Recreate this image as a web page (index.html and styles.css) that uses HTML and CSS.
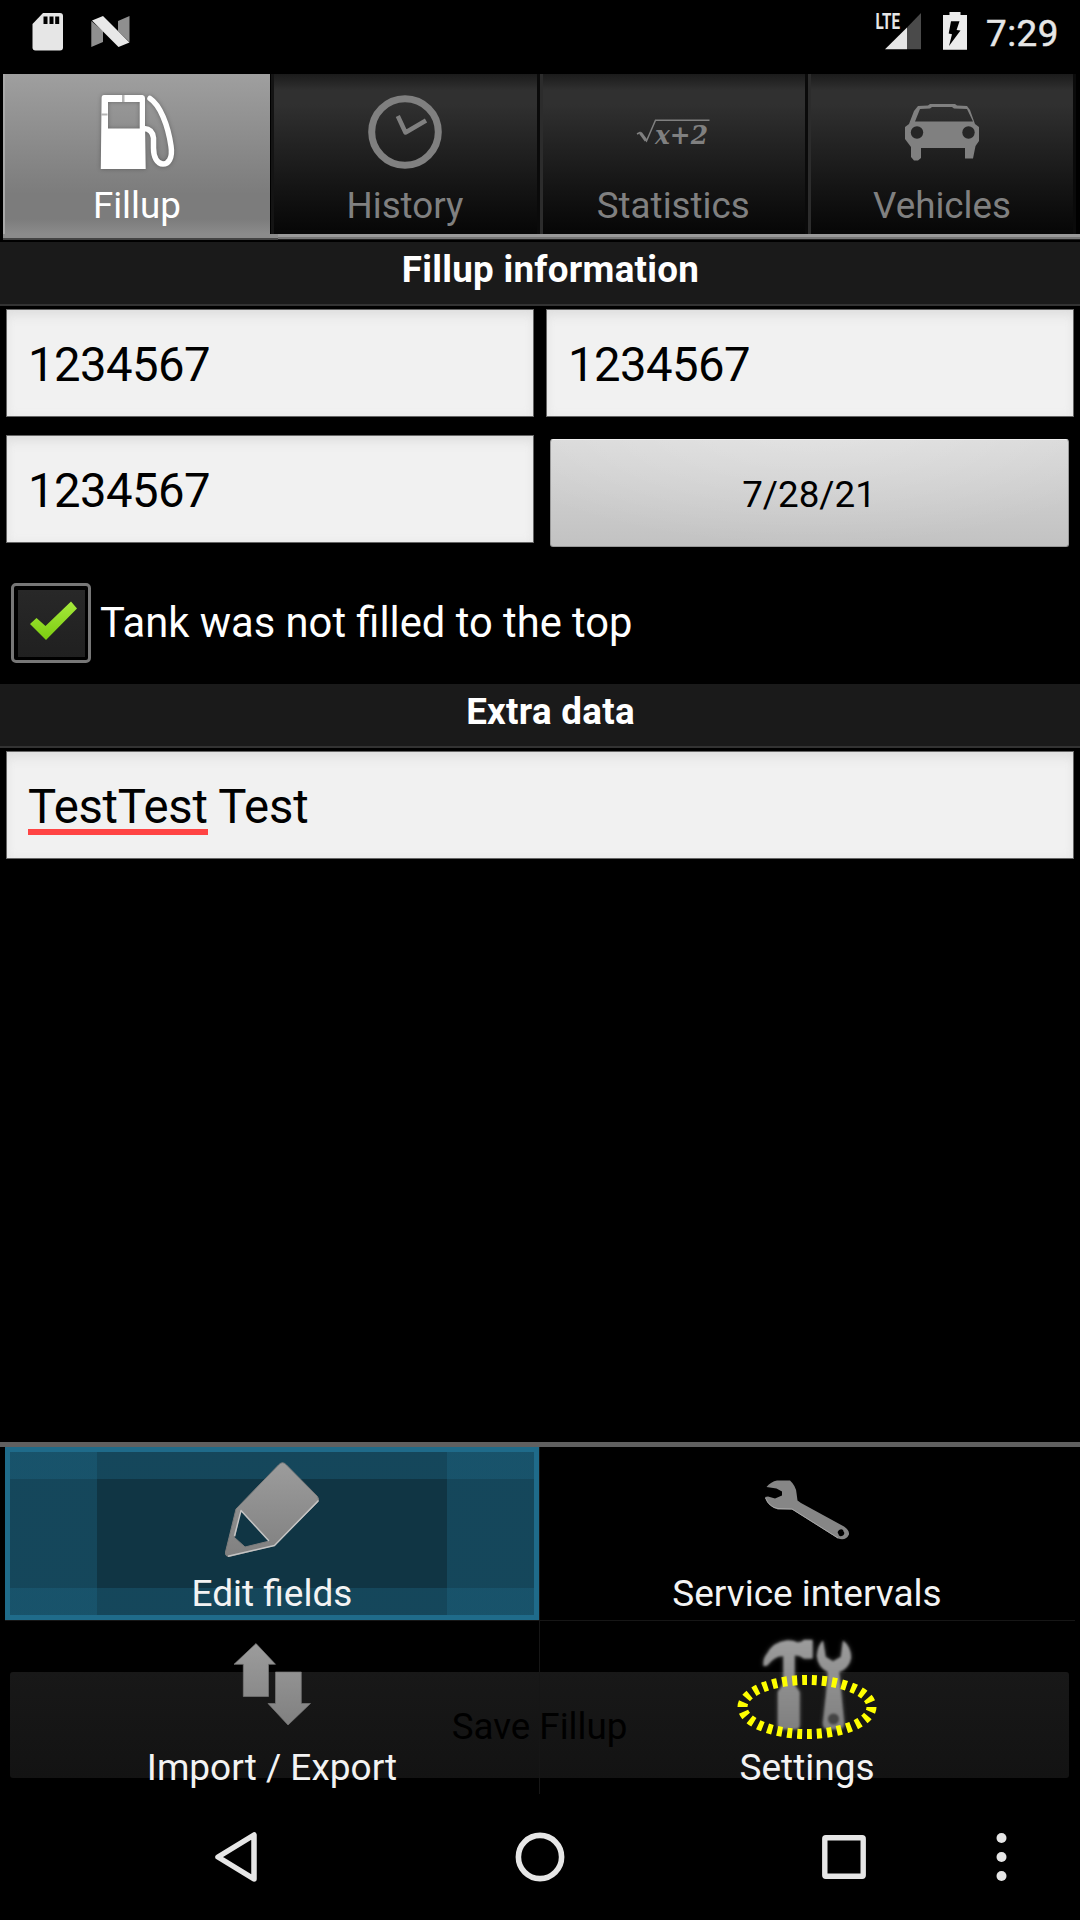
FILE: index.html
```html
<!DOCTYPE html>
<html lang="en">
<head>
<meta charset="utf-8">
<title>Fillup</title>
<link rel="stylesheet" href="styles.css">
</head>
<body>
<div class="screen">
  <header class="status">
    <svg class="status-left" width="110" height="63" viewBox="24 0 110 63">
      <path fill="#e6e6e6" d="M43 13H60q3 0 3 3V47.500q0 3-3 3H35.500q-3 0-3-3V24Z"/>
      <path fill="#000" d="M43.500 16.500h4V24h-4ZM49.500 16.500h4V24h-4ZM55.200 16.500h4V24h-4Z"/>
      <path fill="#8f8f8f" d="M91.300 21V47L103 42V31ZM118 21L129.500 16V42L118 31Z"/>
      <path fill="#e8e8e8" d="M92 20.500L103 16L129.500 42.500L118.500 47Z"/>
    </svg>
    <svg width="100" height="63" viewBox="872 0 100 63">
      <text class="lte" x="875.500" y="29" textLength="24.500" lengthAdjust="spacingAndGlyphs">LTE</text>
      <path fill="#4a4a4a" d="M907 27.500L921 13V49.300H907Z"/>
      <path fill="#e6e6e6" d="M885 49.300L907 27.500V49.300Z"/>
      <path fill="#ececec" d="M949.500 12h11v3H967V49.800H943V15h6.500Z"/>
      <path fill="#000" d="M951 21.300H959.500L956.600 30L960.500 30.600L949 46L952 34.300L948.700 33.500Z"/>
    </svg>
    <span class="clock">7:29</span>
  </header>

  <nav class="tabs">
    <div class="tab active">
      <svg width="84" height="84" viewBox="95 90 84 84">
        <path fill="#fff" fill-rule="evenodd" d="M104 95H142.500Q145 95.500 145 98V124L145.700 169H100.800L101.600 98Q101.600 95 104 95ZM108 102V128.500H139.700V102Z"/>
        <path fill="none" stroke="#fff" stroke-width="5.500" stroke-linecap="round" d="M150 98.500C160 105 168 125 171 146C173 159 168 164 163 164C157 164 153.500 157 153.500 148V138Q152.500 129 144 128.500"/>
        <path fill="#b5b5b5" d="M122 95h2.500v7h-2.500ZM101 113.500h6.500v2h-6.500Z"/>
      </svg>
      <span>Fillup</span>
    </div>
    <div class="tab">
      <svg width="84" height="84" viewBox="363 90 84 84" fill="none" stroke="#808080">
        <circle cx="405" cy="132" r="33.300" stroke-width="7"/>
        <path stroke-width="4.500" stroke-linejoin="round" d="M397.800 116L405.500 132.500L426 120.500"/>
      </svg>
      <span>History</span>
    </div>
    <div class="tab">
      <svg width="84" height="84" viewBox="631 90 84 84">
        <path fill="none" stroke="#808080" stroke-width="1.500" d="M637 134L640 132.500L646.500 141L655.500 120.300H709.500"/>
        <path stroke="#808080" stroke-width="3" d="M640.500 133L646 140.500"/>
        <text class="formula" x="655" y="144" textLength="53" lengthAdjust="spacingAndGlyphs">x+2</text>
      </svg>
      <span>Statistics</span>
    </div>
    <div class="tab">
      <svg width="84" height="84" viewBox="900 90 84 84">
        <path fill="#808080" fill-rule="evenodd" d="M918 106L928 105.500L930 104H955L957 105.500L967 106L970 110L975 124L979 127V141L975.500 146L973 158.500H965V148H921V158L918 160.500H914L911 157V147L905 139V127L909 124L914 111ZM920 109L915 121.500H973L967 109L954 108.500L952 107H932L930 108.500Z"/>
        <g fill="#262626"><circle cx="917" cy="132.500" r="6.200"/><circle cx="968.500" cy="132.500" r="6.200"/></g>
      </svg>
      <span>Vehicles</span>
    </div>
  </nav>

  <main class="content">
    <h2 class="section">Fillup information</h2>
    <div class="fields">
      <div class="input number">1234567</div>
      <div class="input number">1234567</div>
      <div class="input number">1234567</div>
      <div class="button">7/28/21</div>
    </div>
    <div class="check-row">
      <div class="checkbox">
        <svg width="67" height="67" viewBox="18 589.500 67 67">
          <defs><linearGradient id="tick" x1="0" y1="0" x2="0" y2="1"><stop offset="0" stop-color="#a6ea3c"/><stop offset="1" stop-color="#7ccc10"/></linearGradient></defs>
          <path fill="url(#tick)" d="M30 623.500L36.500 617.500L45.500 625.500L71 601L77 608L46 639.500Z"/>
        </svg>
      </div>
      <span>Tank was not filled to the top</span>
    </div>
    <h2 class="section">Extra data</h2>
    <div class="fields single">
      <div class="input"><span class="misspelled">TestTest</span> Test</div>
    </div>
    <div class="save">Save Fillup</div>
  </main>

  <div class="menu">
    <div class="item selected">
      <svg width="100" height="100" viewBox="222 1460 100 100">
        <defs><linearGradient id="metal" x1="0" y1="0" x2="0" y2="1"><stop offset="0" stop-color="#9c9c9c"/><stop offset="1" stop-color="#808080"/></linearGradient></defs>
        <path fill="url(#metal)" stroke="#7d7d7d" stroke-width="1" fill-rule="evenodd" d="M279 1464.500Q282.500 1461 286 1464.500L317.500 1496.500Q320 1500 317 1503L274.500 1545.500L229 1556.500Q225 1556.500 225.500 1552L236 1509ZM240.500 1510L234.500 1537.500L245 1547L269.500 1541Z"/>
        <path fill="none" stroke="#c4c4c4" stroke-width="1.500" stroke-linejoin="round" d="M318.500 1500.500L274.500 1545.500L228 1556.300M234.500 1536L241 1510.500L269 1541"/>
      </svg>
      <span>Edit fields</span>
    </div>
    <div class="item">
      <svg width="100" height="100" viewBox="757 1460 100 100">
        <path fill="#868686" fill-rule="evenodd" d="M766.500 1487Q771 1481.500 777 1480.500H790Q796 1486 796.500 1493L797.500 1500.500L801 1503L844 1526.500Q849.500 1530 849 1534.500Q846 1541 838 1538.500L792 1509.500H778Q768 1507 765 1497L768 1496.500L775 1498.500L782 1495.500V1491.500L776.500 1488.500ZM838.500 1534a3 2.500 -30 1 0 5-2.500a3 2.500 -30 1 0-5 2.500Z"/>
        <path fill="none" stroke="#a8a8a8" d="M765.500 1498Q769 1507 778 1508.500L792 1509L838 1538"/>
      </svg>
      <span>Service intervals</span>
    </div>
    <div class="item">
      <svg width="100" height="100" viewBox="222 1634 100 100">
        <path fill="url(#metal)" stroke="#777" stroke-width=".7" d="M256 1643.500L275.500 1664.300H268.500V1696.500H243.300V1664.300H234ZM275.500 1672H301.300V1703.500H310.500L288 1725L268 1703.500H275.500Z"/>
      </svg>
      <span>Import / Export</span>
    </div>
    <div class="item">
      <svg class="tools" width="100" height="100" viewBox="757 1634 100 100">
        <path fill="url(#metal)" d="M763.500 1666Q763 1658 767 1654Q773 1642 787 1640.500Q793 1640 797 1642.500Q801 1643 804 1640H812.500V1658.500H804Q799 1654.500 794.500 1655.500V1685L799.500 1692V1726Q799 1729 796 1729H781Q778 1729 778 1726V1692L783.500 1684V1656Q775 1655 767 1665.500Z"/>
        <path fill="url(#metal)" fill-rule="evenodd" d="M823 1640.500L825.500 1657L833 1661.500L841 1657L843 1640.500Q851 1647 851 1658Q849 1668 839 1672L841 1692L844 1723Q844 1729 838 1729H828Q823 1729 823 1723L826.500 1692L828 1672Q818 1667 817 1656Q818 1645 823 1640.500Z"/>
        <circle cx="833.500" cy="1719" r="5.500" fill="#444"/>
      </svg>
      <span>Settings</span>
    </div>
    <svg class="marker" width="144" height="70" viewBox="-72 -35 144 70">
      <ellipse rx="64.500" ry="27" fill="none" stroke="#ff0" stroke-width="10" pathLength="300" stroke-dasharray="5 5"/>
    </svg>
  </div>

  <footer class="navbar">
    <svg width="52" height="60" viewBox="210 1827 52 60"><path fill="none" stroke="#e6e6e6" stroke-width="5.500" stroke-linejoin="round" d="M218 1857L254 1835V1879Z"/></svg>
    <svg width="60" height="60" viewBox="-30 -30 60 60"><circle r="21.600" fill="none" stroke="#e6e6e6" stroke-width="5.600"/></svg>
    <svg width="60" height="60" viewBox="-30 -30 60 60"><rect x="-19.200" y="-19.200" width="38.400" height="38.400" rx="1" fill="none" stroke="#e6e6e6" stroke-width="5.400"/></svg>
    <svg width="11" height="60" viewBox="-5.500 -30 11 60" fill="#e6e6e6"><circle cy="-19" r="5"/><circle r="5"/><circle cy="19" r="5"/></svg>
  </footer>
</div>
</body>
</html>
```
FILE: styles.css
```css
* { box-sizing: border-box; }

body {
  margin: 0;
  background: #000;
  font-family: Roboto, "Noto Sans", sans-serif;
  font-size: 36.75px;
  line-height: 44px;
  color: #fff;
}

svg { display: block; flex: none; }

.screen {
  position: relative;
  width: 1080px;
  height: 1920px;
  display: flex;
  flex-direction: column;
  overflow: hidden;
  background: #000;
}

/* Status bar */
.status {
  height: 74px;
  display: flex;
  align-items: flex-start;
  padding: 0 21px 0 24px;
}
.status-left { margin-right: auto; }
.clock {
  width: 73px;
  margin-left: 14px;
  padding-top: 11.5px;
  letter-spacing: .5px;
  color: #e6e6e6;
  -webkit-text-stroke: .5px #e6e6e6;
}
.lte { font-size: 21.5px; font-weight: 700; fill: #e6e6e6; }

/* Tabs */
.tabs {
  height: 168px;
  display: grid;
  grid-template-columns: repeat(4, 268.3px);
  align-items: start;
  padding-left: 3px;
  background:
    linear-gradient(#999 0 3px, #777 3px 5px, #222 5px 6px) 278px 160px / 802px 6px no-repeat,
    linear-gradient(#8b8b8b 0 4px, #444 4px 6px) 3px 160px / 275px 6px no-repeat;
}
.tab {
  height: 160px;
  display: flex;
  flex-direction: column;
  align-items: center;
  padding-top: 16px;
  gap: 9.5px;
  color: #808080;
  background: linear-gradient(#1b1b1b, #303030 16px, #303030 30px, #1e1e1e 85px, #141414 115px, #060606);
  border-left: 3px solid #2c2c2c;
  border-right: 3px solid #0a0a0a;
}
.tab:nth-child(2) { border-left-color: #141414; }
.tab:nth-child(2), .tab:nth-child(3) { padding-right: 1px; }
.tab.active {
  margin-right: 1px;
  padding-right: 1.5px;
  color: #fff;
  background: linear-gradient(#9f9f9f, #7c7c7c 120px, #7c7c7c 145px, #8b8b8b 160px);
  border-left: 2px solid #a8a8a8;
  border-right: 0;
}
.tab.active svg { filter: drop-shadow(0 0 2px rgba(0, 0, 0, .3)); }
.formula {
  font: italic 700 26px "DejaVu Serif", serif;
  fill: #808080;
}

/* Form */
.content { display: flex; flex-direction: column; flex: 1; }
.section {
  height: 64px;
  margin: 0;
  padding: 6px 0 0 21px;
  font-size: 36.75px;
  font-weight: 700;
  line-height: 44px;
  letter-spacing: .28px;
  text-align: center;
  background: #1a1a1a;
  border-bottom: 2px solid #333;
}
.fields {
  display: grid;
  grid-template-columns: 528px 528px;
  column-gap: 12px;
  row-gap: 18px;
  padding: 3px 0 0 6px;
}
.fields.single { grid-template-columns: 1068px; }
.input {
  height: 108px;
  padding: 4px 0 0 21px;
  font-size: 47.25px;
  line-height: 102px;
  letter-spacing: -.14px;
  color: #000;
  background: #f1f1f1;
  border: 1px solid #666;
  box-shadow: inset 0 9px 12px -4px #dedede, inset 0 0 10px #e8e8e8;
}
.input.number { letter-spacing: -.54px; }
.button {
  height: 108px;
  margin: 4px 5px 0 4px;
  padding-right: 1px;
  line-height: 109px;
  text-align: center;
  color: #000;
  background: radial-gradient(ellipse 75% 150% at 50% -50%, rgba(255, 255, 255, .35), transparent), linear-gradient(#d8d8d8, #c2c2c2);
  border: 1px solid #999;
  border-top-color: #eee;
  border-radius: 3px;
}
.check-row {
  height: 80px;
  margin: 36px 0 21px 11px;
  display: flex;
  align-items: center;
  gap: 9px;
  font-size: 41.7px;
}
.checkbox {
  width: 80px;
  height: 80px;
  display: grid;
  place-items: center;
  border: 3px solid #777;
  border-radius: 5px;
}
.checkbox svg { background: linear-gradient(#282828, #202020); }
.misspelled {
  letter-spacing: -.25px;
  background: linear-gradient(#ff4444, #ff4444) 0 100% / 100% 6px no-repeat;
}
.save {
  height: 106px;
  margin: auto 11px 16px 10px;
  line-height: 109px;
  text-align: center;
  color: #000;
  background: linear-gradient(#181818, #131313);
  border-radius: 3px;
}

/* Options menu, laid over the form */
.menu {
  position: absolute;
  left: 0;
  top: 1442px;
  width: 1080px;
  display: grid;
  grid-template-columns: 534px 534px;
  grid-template-rows: 173px 173px;
  gap: 1px;
  padding: 0 5px;
  border-top: 5px solid #606060;
  background:
    linear-gradient(#161616, #161616) 5px 173px / 1070px 1px no-repeat,
    linear-gradient(#161616, #161616) 539px 0 / 1px 100% no-repeat;
}
.item {
  display: flex;
  flex-direction: column;
  align-items: center;
  padding-top: 13px;
  gap: 12px;
  font-size: 37px;
  color: #f3f3f3;
}
.item.selected {
  padding-top: 8px;
  border: 5px solid #1f6b8a;
  background:
    linear-gradient(90deg, rgba(31, 107, 138, .33) 87px, transparent 87px 437px, rgba(31, 107, 138, .33) 437px),
    linear-gradient(rgba(31, 107, 138, .33) 27px, transparent 27px 136px, rgba(31, 107, 138, .33) 136px),
    #103544;
}
.tools { filter: blur(1px) drop-shadow(0 0 2px rgba(190, 190, 190, .45)); }
.marker { position: absolute; left: 734.5px; top: 225px; }

/* System navigation */
.navbar {
  height: 126px;
  display: flex;
  align-items: center;
  padding-left: 210px;
}
.navbar svg:nth-child(2) { margin-left: 248px; }
.navbar svg:nth-child(3) { margin-left: 244px; }
.navbar svg:nth-child(4) { margin-left: 122px; }
```
